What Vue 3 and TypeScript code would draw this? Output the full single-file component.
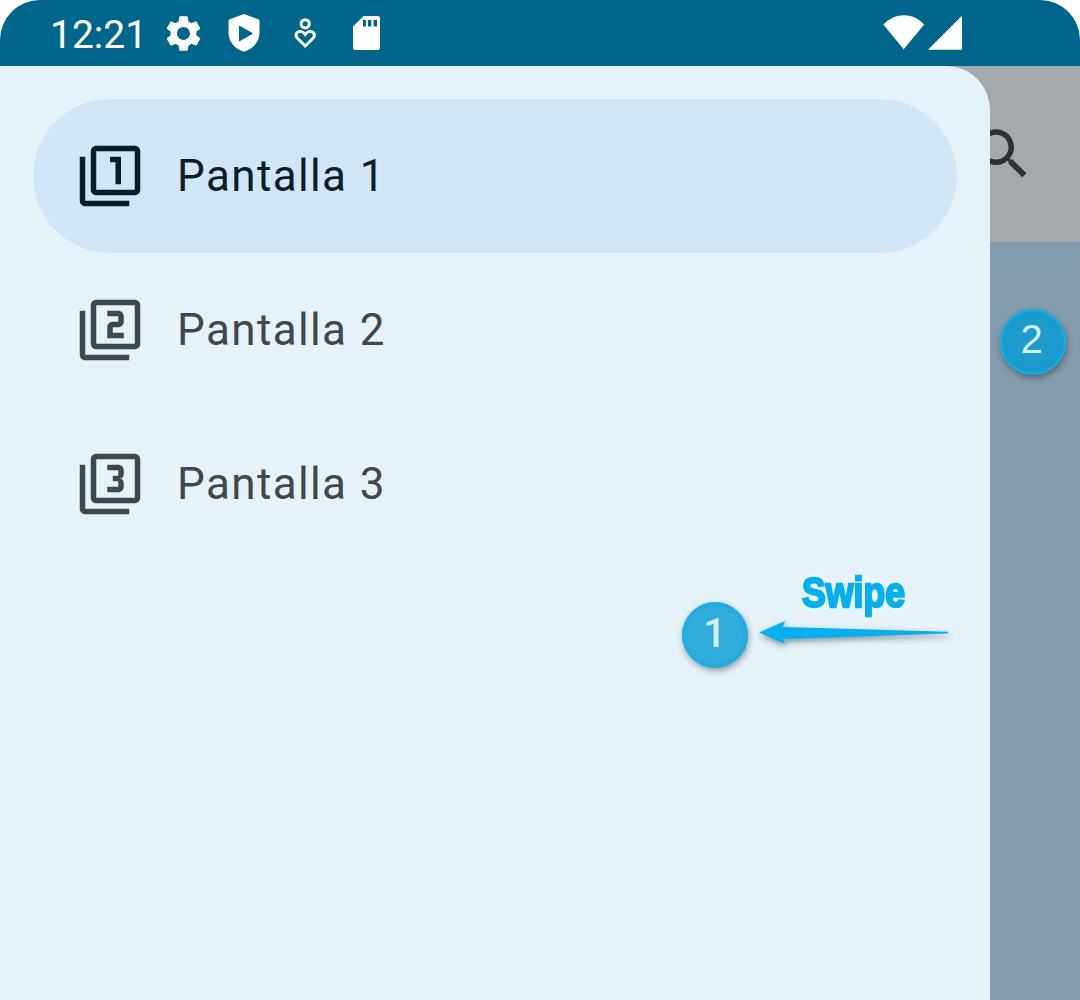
<script setup lang="ts">
import { ref } from 'vue'

interface Entry {
  label: string
  icon: string
}

const frame =
  'M3 5H1v16c0 1.1.9 2 2 2h16v-2H3V5zm18-4H7c-1.1 0-2 .9-2 2v14c0 1.1.9 2 2 2h14c1.1 0 2-.9 2-2V3c0-1.1-.9-2-2-2zm0 16H7V3h14v14z'

const entries: Entry[] = [
  { label: 'Pantalla 1', icon: frame + 'M14 15h2V5h-4v2h2v8z' },
  {
    label: 'Pantalla 2',
    icon: frame + 'm-4-4h-4v-2h2c1.1 0 2-.89 2-2V7c0-1.11-.9-2-2-2h-4v2h4v2h-2c-1.1 0-2 .89-2 2v4h6v-2z',
  },
  {
    label: 'Pantalla 3',
    icon: frame + 'M17 13v-1.5c0-.83-.67-1.5-1.5-1.5.83 0 1.5-.67 1.5-1.5V7c0-1.11-.9-2-2-2h-4v2h4v2h-2v2h2v2h-4v2h4c1.1 0 2-.89 2-2z',
  },
]

const selected = ref(0)
</script>

<template>
  <div class="device">
    <header class="status">
      <span class="clock">12:21</span>
      <svg class="gear" viewBox="0 0 24 24">
        <path d="M19.14,12.94c0.04-0.3,0.06-0.61,0.06-0.94c0-0.32-0.02-0.64-0.07-0.94l2.03-1.58c0.18-0.14,0.23-0.41,0.12-0.61l-1.92-3.32c-0.12-0.22-0.37-0.29-0.59-0.22l-2.39,0.96c-0.5-0.38-1.03-0.7-1.62-0.94L14.4,2.81c-0.04-0.24-0.24-0.41-0.48-0.41h-3.84c-0.24,0-0.43,0.17-0.47,0.41L9.25,5.35C8.66,5.59,8.12,5.92,7.63,6.29L5.24,5.33c-0.22-0.08-0.47,0-0.59,0.22L2.74,8.87C2.62,9.08,2.66,9.34,2.86,9.48l2.03,1.58C4.84,11.36,4.8,11.69,4.8,12s0.02,0.64,0.07,0.94l-2.03,1.58c-0.18,0.14-0.23,0.41-0.12,0.61l1.92,3.32c0.12,0.22,0.37,0.29,0.59,0.22l2.39-0.96c0.5,0.38,1.03,0.7,1.62,0.94l0.36,2.54c0.05,0.24,0.24,0.41,0.48,0.41h3.84c0.24,0,0.44-0.17,0.47-0.41l0.36-2.54c0.59-0.24,1.13-0.56,1.62-0.94l2.39,0.96c0.22,0.08,0.47,0,0.59-0.22l1.92-3.32c0.12-0.22,0.07-0.47-0.12-0.61L19.14,12.94z M12,15.6c-1.98,0-3.6-1.62-3.6-3.6s1.62-3.6,3.6-3.6s3.6,1.62,3.6,3.6S13.98,15.6,12,15.6z" />
      </svg>
      <svg class="shield" viewBox="0 0 32 40">
        <path fill-rule="evenodd" d="M16 1 30.3 6.3Q31.5 6.8 31.5 8V19.5C31.5 29 25 36 16 38.8 7 36 .5 29 .5 19.5V8Q.5 6.8 1.7 6.3ZM11 13.6V27.4Q11 28.6 12 28L24 21.2Q25 20.5 24 19.8L12 13Q11 12.5 11 13.6Z" />
      </svg>
      <svg class="care" viewBox="0 0 24 32">
        <circle cx="12.2" cy="6.8" r="4.1" />
        <path d="M12.2 29 4.2 21C0 16.2 7.6 11 12.2 17.4 16.8 11 24.4 16.2 20.2 21Z" />
      </svg>
      <svg class="card" viewBox="0 0 28 36">
        <path fill-rule="evenodd" d="M10.6 1H24.7Q27 1 27 3.3V32.7Q27 35 24.7 35H2.3Q0 35 0 32.7V11.4ZM10 5V11.5H13V5ZM15 5V11.5H18.3V5ZM20.5 5V11.5H24V5Z" />
      </svg>
      <span class="spacer"></span>
      <svg class="signal" viewBox="0 0 80 36">
        <path d="M20.7 34.3.3 9.5C12-3 30-3 41.2 9.5Z" />
        <path d="M45 34.8 79 .8V34.8Z" />
      </svg>
    </header>

    <main class="screen">
      <nav class="drawer">
        <a
          v-for="(entry, i) in entries"
          :key="entry.label"
          class="item"
          :class="{ active: i === selected }"
          @click="selected = i"
        >
          <svg class="item-icon" viewBox="0 0 24 24"><path :d="entry.icon" /></svg>
          <span>{{ entry.label }}</span>
        </a>
      </nav>
      <div class="content">
        <div class="appbar">
          <svg class="search" viewBox="0 0 24 24">
            <path d="M15.5 14h-.79l-.28-.27C15.41 12.59 16 11.11 16 9.5 16 5.91 13.09 3 9.5 3S3 5.91 3 9.5 5.91 16 9.5 16c1.61 0 3.09-.59 4.23-1.57l.27.28v.79l5 4.99L20.49 19l-4.99-5zm-6 0C7.01 14 5 11.99 5 9.5S7.01 5 9.5 5 14 7.01 14 9.5 11.99 14 9.5 14z" />
          </svg>
        </div>
      </div>
    </main>

    <svg class="swipe" viewBox="0 0 210 120">
      <text x="51" y="46.5" textLength="103" lengthAdjust="spacingAndGlyphs">Swipe</text>
      <path d="M8 72.5 34 61 32 67 197 71.8V73.4L32 79 34 84Z" />
    </svg>
    <div class="step one"><span>1</span></div>
    <div class="step two"><span>2</span></div>
  </div>
</template>

<style>
body {
  background: #fff;
}
</style>

<style scoped>
.device {
  position: relative;
  display: flex;
  flex-direction: column;
  width: 1080px;
  height: 1000px;
  overflow: hidden;
  border-radius: 40px 40px 0 0;
  font-family: Roboto, sans-serif;
}
.status {
  display: flex;
  align-items: center;
  flex: none;
  box-sizing: border-box;
  height: 66px;
  padding: 0 117px 0 50px;
  background: #00668b;
  color: #fff;
  fill: #fff;
}
.clock {
  width: 112px;
  font-size: 39px;
  line-height: 66px;
  padding-top: 3px;
}
.gear {
  width: 43px;
  height: 43px;
}
.shield {
  width: 32px;
  height: 40px;
  margin-left: 23px;
}
.care {
  width: 24px;
  height: 32px;
  margin-left: 33px;
  fill: none;
  stroke: #fff;
  stroke-width: 3;
}
.card {
  width: 28px;
  height: 36px;
  margin-left: 36px;
}
.spacer {
  flex: 1;
}
.signal {
  width: 80px;
  height: 36px;
}
.screen {
  display: flex;
  flex: 1;
  background: #a4a9ad;
}
.drawer {
  position: relative;
  z-index: 1;
  box-sizing: border-box;
  flex: none;
  width: 990px;
  padding: 33px;
  background: #e5f3f9;
  border-top-right-radius: 44px;
}
.item {
  display: flex;
  align-items: center;
  gap: 34px;
  box-sizing: border-box;
  height: 154px;
  padding: 0 44px;
  border-radius: 77px;
  font-size: 44px;
  letter-spacing: 1.375px;
  color: #41484d;
  fill: #41484d;
}
.item.active {
  background: #d2e5f5;
  color: #0a1e28;
  fill: #0a1e28;
}
.item-icon {
  width: 66px;
  height: 66px;
}
.content {
  flex: 1;
  background: #839bab;
}
.appbar {
  display: flex;
  align-items: center;
  height: 176px;
  background: #a4a9ad;
}
.search {
  flex: none;
  width: 66px;
  height: 66px;
  margin-left: -20px;
  fill: #2c3134;
}
.swipe {
  position: absolute;
  z-index: 2;
  left: 751px;
  top: 560px;
  width: 210px;
  height: 120px;
  overflow: visible;
  fill: #03b1f0;
}
.swipe text {
  font: bold 43px "Liberation Sans", sans-serif;
  stroke: #03b1f0;
  stroke-width: 2.4px;
  filter: drop-shadow(0 0 3px rgba(255, 255, 255, 0.8));
}
.swipe path {
  filter: drop-shadow(1px 3px 3px rgba(0, 0, 0, 0.4));
}
.step {
  position: absolute;
  z-index: 2;
  display: flex;
  align-items: center;
  justify-content: center;
  box-sizing: border-box;
  width: 66px;
  height: 66px;
  border: 2px solid #14b0e8;
  border-radius: 50%;
  color: #d5eef7;
}
.step span {
  margin-top: -5px;
  margin-left: -2px;
}
.one {
  left: 681.5px;
  top: 601.5px;
  font: 500 40px Roboto, sans-serif;
  background: #31add9;
  box-shadow: 1px 3px 6px rgba(0, 0, 0, 0.35), inset 0 0 4px #18a8df;
}
.one span {
  margin-top: -3px;
  margin-left: 0;
}
.two {
  left: 999.5px;
  top: 308.5px;
  font: 40px "Liberation Sans", sans-serif;
  background: #1d9bcb;
  box-shadow: 1px 3px 6px rgba(0, 0, 0, 0.35), inset 0 0 4px #0ba2dc;
}
.two span {
  margin-top: -4px;
}
</style>
